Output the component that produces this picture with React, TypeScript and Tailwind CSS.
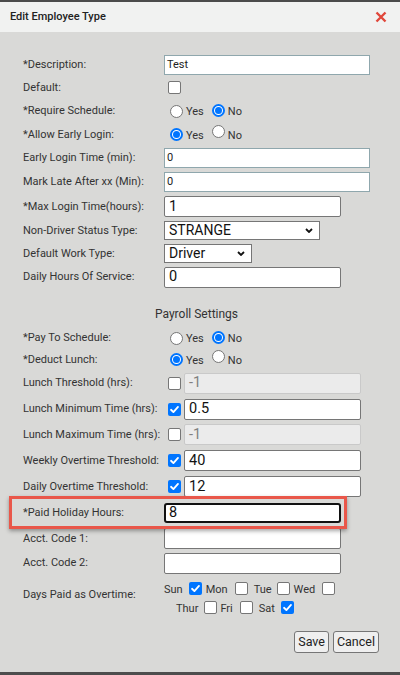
import type { ReactNode } from "react";

const font = { fontFamily: "Roboto, 'Liberation Sans', sans-serif" };

function Label({ children }: { children: ReactNode }) {
  return <div className="mt-[1px] w-[141px] shrink-0 whitespace-nowrap text-[11px] text-[#333]">{children}</div>;
}

function Row({ h, children }: { h: string; children: ReactNode }) {
  return <div className={`flex items-center ${h}`}>{children}</div>;
}

function Check({ on = false, className = "" }: { on?: boolean; className?: string }) {
  if (on) {
    return (
      <span className={`inline-flex h-[13px] w-[13px] shrink-0 items-center justify-center rounded-[2px] bg-[#0075ff] ${className}`}>
        <svg viewBox="0 0 12 12" className="h-[11px] w-[11px]">
          <path d="M2.2 6.3 L4.8 8.8 L9.8 3.2" fill="none" stroke="white" strokeWidth="2" strokeLinecap="round" strokeLinejoin="round" />
        </svg>
      </span>
    );
  }
  return <span className={`inline-block h-[13px] w-[13px] shrink-0 rounded-[2px] border border-[#767676] bg-white ${className}`} />;
}

function Radio({ on = false }: { on?: boolean }) {
  if (on) {
    return (
      <span className="inline-flex h-[13px] w-[13px] shrink-0 items-center justify-center rounded-full border-2 border-[#0075ff] bg-white">
        <span className="h-[7px] w-[7px] rounded-full bg-[#0075ff]" />
      </span>
    );
  }
  return <span className="inline-block h-[13px] w-[13px] shrink-0 rounded-full border border-[#767676] bg-white" />;
}

function YesNo({ yes }: { yes: boolean }) {
  return (
    <div className="ml-[6px] flex items-center text-[11px] text-[#333]">
      <Radio on={yes} />
      <span className="ml-[3px] mt-[3px]">Yes</span>
      <span className="ml-[8px]">
        <Radio on={!yes} />
      </span>
      <span className="ml-[3px] mt-[3px]">No</span>
    </div>
  );
}

function SmallInput({ value = "" }: { value?: string }) {
  return (
    <div className="flex h-[20px] w-[206px] items-center border border-[#8fa7ad] bg-white pl-[2px] text-[11px] text-[#222]">
      {value}
    </div>
  );
}

function BigInput({ value = "", w = "w-[177px]" }: { value?: string; w?: string }) {
  return (
    <div className={`flex h-[21px] ${w} items-center rounded-[2px] border border-[#767676] bg-white pl-[4px] text-[14.5px] text-[#111]`}>
      {value}
    </div>
  );
}

function DisabledInput({ value }: { value: string }) {
  return (
    <div className="flex h-[21px] w-[177px] items-center rounded-[2px] border border-[#c9c9c9] bg-[#ebebeb] pl-[4px] text-[14.5px] text-[#808080]">
      {value}
    </div>
  );
}

function Select({ value, w }: { value: string; w: string }) {
  return (
    <div className={`flex h-[19px] ${w} items-center justify-between border border-[#767676] bg-white pl-[4px] pr-[6px] text-[14px] text-[#111]`}>
      <span>{value}</span>
      <svg viewBox="0 0 8 5" className="h-[5px] w-[8px]">
        <path d="M1 1 L4 4 L7 1" fill="none" stroke="#111" strokeWidth="1.8" />
      </svg>
    </div>
  );
}

function Toggled({ on, children }: { on: boolean; children: ReactNode }) {
  return (
    <div className="flex items-center">
      <Check on={on} className="ml-[4px] mr-[3px]" />
      {children}
    </div>
  );
}

export default function App() {
  return (
    <div className="flex h-[675px] w-[400px] flex-col bg-[#d9d9d7]" style={font}>
      <div className="h-[2px] bg-[#4b4b4b]" />
      <div className="flex h-[30px] items-center justify-between bg-[#f1f2f1] pl-[10px] pr-[13px]">
        <span className="text-[11px] font-medium text-[#222]">Edit Employee Type</span>
        <svg viewBox="0 0 12 12" className="h-[12px] w-[12px]">
          <path d="M1.5 1.5 L10.5 10.5 M10.5 1.5 L1.5 10.5" stroke="#e0473b" strokeWidth="2.4" />
        </svg>
      </div>

      <div className="flex-1 pl-[23px] pt-[22px]">
        <Row h="h-[22px]">
          <Label>*Description:</Label>
          <SmallInput value="Test" />
        </Row>
        <Row h="h-[23px]">
          <Label>Default:</Label>
          <Check className="ml-[4px]" />
        </Row>
        <Row h="h-[24px]">
          <Label>*Require Schedule:</Label>
          <YesNo yes={false} />
        </Row>
        <Row h="h-[23px]">
          <Label>*Allow Early Login:</Label>
          <YesNo yes={true} />
        </Row>
        <Row h="h-[24px]">
          <Label>Early Login Time (min):</Label>
          <SmallInput value="0" />
        </Row>
        <Row h="h-[24px]">
          <Label>Mark Late After xx (Min):</Label>
          <SmallInput value="0" />
        </Row>
        <Row h="h-[25px]">
          <Label>*Max Login Time(hours):</Label>
          <BigInput value="1" />
        </Row>
        <Row h="h-[23px]">
          <Label>Non-Driver Status Type:</Label>
          <Select value="STRANGE" w="w-[156px]" />
        </Row>
        <Row h="h-[23px]">
          <Label>Default Work Type:</Label>
          <Select value="Driver" w="w-[88px]" />
        </Row>
        <Row h="h-[24px]">
          <Label>Daily Hours Of Service:</Label>
          <BigInput value="0" />
        </Row>

        <div className="flex h-[38px] items-end pb-[4px] pl-[132px] text-[12px] text-[#333]">Payroll Settings</div>

        <Row h="h-[22px]">
          <Label>*Pay To Schedule:</Label>
          <YesNo yes={false} />
        </Row>
        <Row h="h-[21px]">
          <Label>*Deduct Lunch:</Label>
          <YesNo yes={true} />
        </Row>
        <Row h="h-[26px]">
          <Label>Lunch Threshold (hrs):</Label>
          <Toggled on={false}>
            <DisabledInput value="-1" />
          </Toggled>
        </Row>
        <Row h="h-[26px]">
          <Label>Lunch Minimum Time (hrs):</Label>
          <Toggled on={true}>
            <BigInput value="0.5" />
          </Toggled>
        </Row>
        <Row h="h-[25px]">
          <Label>Lunch Maximum Time (hrs):</Label>
          <Toggled on={false}>
            <DisabledInput value="-1" />
          </Toggled>
        </Row>
        <Row h="h-[27px]">
          <Label>Weekly Overtime Threshold:</Label>
          <Toggled on={true}>
            <BigInput value="40" />
          </Toggled>
        </Row>
        <Row h="h-[25px]">
          <Label>Daily Overtime Threshold:</Label>
          <Toggled on={true}>
            <BigInput value="12" />
          </Toggled>
        </Row>
        <div className="relative flex h-[27px] items-center">
          <span className="pointer-events-none absolute left-[-14px] top-[-3px] h-[33px] w-[338px] border-[3px] border-[#e9574a] shadow-[0_2px_4px_rgba(0,0,0,0.35)]" />
          <Label>*Paid Holiday Hours:</Label>
          <div className="flex h-[20px] w-[177px] items-center rounded-[3px] border-2 border-[#111] bg-white pl-[3px] text-[14.5px] text-[#111]">
            8
          </div>
        </div>
        <Row h="h-[25px]">
          <Label>Acct. Code 1:</Label>
          <BigInput />
        </Row>
        <Row h="h-[24px]">
          <Label>Acct. Code 2:</Label>
          <BigInput />
        </Row>

        <div className="flex h-[40px] items-center">
          <Label>Days Paid as Overtime:</Label>
          <div className="flex flex-col gap-[1px] self-start pt-[4px] text-[11px] text-[#333]">
            <div className="flex h-[18px] items-center">
              <span className="mt-[4px]">Sun</span>
              <Check on className="ml-[6px] mr-[4px]" />
              <span className="mt-[4px]">Mon</span>
              <Check className="ml-[7px] mr-[6px]" />
              <span className="mt-[4px]">Tue</span>
              <Check className="ml-[5px] mr-[4px]" />
              <span className="mt-[4px]">Wed</span>
              <Check className="ml-[7px]" />
            </div>
            <div className="flex h-[18px] items-center pl-[12px]">
              <span className="mt-[4px]">Thur</span>
              <Check className="ml-[6px] mr-[3px]" />
              <span className="mt-[4px]">Fri</span>
              <Check className="ml-[7px] mr-[6px]" />
              <span className="mt-[4px]">Sat</span>
              <Check on className="ml-[6px]" />
            </div>
          </div>
        </div>

        <div className="mt-[16px] flex justify-end gap-[4px] pr-[21px]">
          <button className="h-[22px] rounded-[3px] border border-[#767676] bg-[#efefef] px-[3px] text-[12.5px] text-[#222]">
            Save
          </button>
          <button className="h-[22px] rounded-[3px] border border-[#767676] bg-[#efefef] px-[3px] text-[12.5px] text-[#222]">
            Cancel
          </button>
        </div>
      </div>
      <div className="h-[3px] bg-[#4d4d4d]" />
    </div>
  );
}
